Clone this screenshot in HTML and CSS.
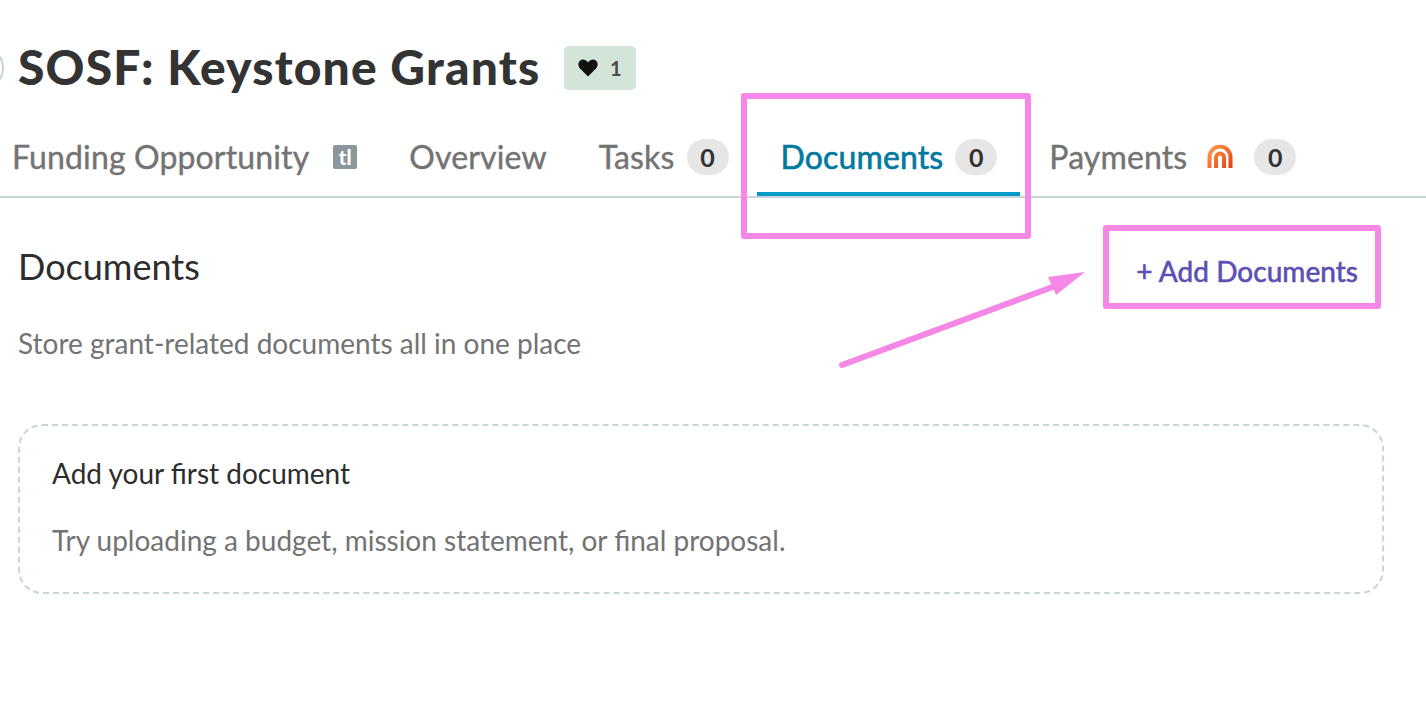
FILE: index.html
```html
<!DOCTYPE html>
<html lang="en">
<head>
<meta charset="utf-8">
<title>SOSF: Keystone Grants</title>
<link rel="stylesheet" href="styles.css">
</head>
<body>
<div class="page">
  <header class="title-row">
    <span class="avatar"></span>
    <h1 class="title">SOSF: Keystone Grants</h1>
    <span class="likes">
      <svg class="heart" viewBox="0 0 20 18" width="20" height="18"><path d="M10 17.500 2 9.400C-.2 7.100-.1 3.700 1.900 1.800 4-.1 7.200.1 10 3.200 12.800.1 16-.1 18.100 1.800c2 1.900 2.100 5.300-.1 7.600z" fill="#111"/></svg>
      <span class="likes-count">1</span>
    </span>
  </header>
  <nav class="tabs">
    <a class="tab tab-funding">Funding Opportunity <span class="tl">tl</span></a>
    <a class="tab tab-overview">Overview</a>
    <a class="tab tab-tasks">Tasks <span class="count">0</span></a>
    <a class="tab tab-docs active">Documents <span class="count">0</span></a>
    <a class="tab tab-pay">Payments
      <svg class="arch" viewBox="0 0 28 24" width="28" height="24">
        <defs><linearGradient id="archg" x1="0" y1="0" x2="1" y2="1"><stop offset="0" stop-color="#ff9a4d"/><stop offset="1" stop-color="#e8400f"/></linearGradient></defs>
        <path d="M3.500 23V12a10.500 10.500 0 0 1 21 0v11M10 23V12.500a4 4 0 0 1 8 0V23" fill="none" stroke="url(#archg)" stroke-width="4"/>
      </svg>
      <span class="count">0</span></a>
  </nav>
  <main class="content">
    <div class="section-head">
      <h2 class="section-title">Documents</h2>
      <a class="add-link">+ Add Documents</a>
    </div>
    <p class="section-desc">Store grant-related documents all in one place</p>
    <div class="empty">
      <h3 class="empty-title">Add your first document</h3>
      <p class="empty-text">Try uploading a budget, mission statement, or final proposal.</p>
    </div>
  </main>
</div>
<div class="mark mark-tab"></div>
<div class="mark mark-add"></div>
<svg class="arrow" viewBox="0 0 260 110" width="260" height="110">
  <path d="M6 100 L222 20" stroke="#f587e6" stroke-width="6" stroke-linecap="round" fill="none"/>
  <path d="M249 7 L212 12 L220 30 Z" fill="#f587e6"/>
</svg>
</body>
</html>
```
FILE: styles.css
```css
* { box-sizing: border-box; }
html, body { margin: 0; padding: 0; background: #fff; }
body { width: 1426px; height: 724px; overflow: hidden; position: relative; font-family: "Lato", "Liberation Sans", sans-serif; color: #2d2d2d; }
.page { display: flex; flex-direction: column; padding-top: 46px; }
.title-row { display: flex; align-items: center; height: 44px; padding-left: 18px; position: relative; }
.avatar { position: absolute; left: -40px; top: 0; width: 44px; height: 44px; border-radius: 50%; border: 2px solid #c7d5dc; background: #fff; }
.title { margin: 0 0 2px; font-size: 48px; font-weight: 900; line-height: 44px; color: #333; letter-spacing: 1.15px; }
.likes { margin-left: 24px; width: 72px; height: 44px; padding-right: 1px; background: #d3e5d8; border-radius: 5px; display: flex; align-items: center; justify-content: center; gap: 12px; }
.heart { display: block; }
.likes-count { font-size: 20px; font-weight: 700; color: #4a4a4a; }
.tabs { display: flex; align-items: flex-start; height: 72px; margin-top: 36px; border-bottom: 2px solid #c8d5d9; padding-left: 12px; }
.tab { display: flex; align-items: center; height: 70px; padding-bottom: 10px; font-size: 32px; color: #737373; white-space: nowrap; letter-spacing: 0.14px; -webkit-text-stroke: 0.4px currentColor; }
.tab-overview { margin-left: 52px; }
.tab-tasks { margin-left: 52px; gap: 12px; }
.tab-funding { gap: 24px; }
.tab-docs { margin-left: 28px; padding: 0 23px 6px 24px; gap: 12px; color: #00799f; border-bottom: 4px solid #009bc9; -webkit-text-stroke: 0.6px currentColor; }
.tab-pay { margin-left: 29px; }
.tl { display: inline-flex; align-items: center; justify-content: center; width: 24px; height: 24px; margin-top: 2px; border-radius: 2px; background: #8a9699; color: #fff; font-size: 20px; font-weight: 900; line-height: 1; -webkit-text-stroke: 0; }
.count { display: inline-flex; align-items: center; justify-content: center; width: 42px; height: 36px; margin-top: 2px; border-radius: 18px; background: #e6e6e6; color: #333; font-size: 25px; font-weight: 700; -webkit-text-stroke: 0; letter-spacing: 0; }
.arch { margin: 2px 20px 0 19px; display: block; }
.content { padding: 0 42px 0 18px; }
.section-head { display: flex; justify-content: space-between; align-items: center; margin-top: 44px; height: 56px; }
.section-title { margin: 0 0 8px; font-size: 36px; font-weight: 400; color: #2d2d2d; }
.add-link { margin-top: 2px; font-size: 28px; letter-spacing: 0.05px; color: #5a50b5; padding-right: 26px; -webkit-text-stroke: 0.6px currentColor; }
.section-desc { margin: 28px 0 0; font-size: 28px; line-height: 34px; color: #737373; }
.empty { margin-top: 64px; height: 170px; border: 2px dashed #c8d5d9; border-radius: 24px; padding: 30px 32px; }
.empty-title { margin: 0; font-size: 28px; line-height: 34px; font-weight: 400; color: #2d2d2d; }
.empty-text { margin: 33px 0 0; font-size: 28px; line-height: 34px; color: #737373; }
.mark { position: absolute; border: 6px solid #f587e6; border-radius: 3px; }
.mark-tab { left: 741px; top: 93px; width: 290px; height: 146px; }
.mark-add { left: 1103px; top: 225px; width: 278px; height: 84px; }
.arrow { position: absolute; left: 836px; top: 265px; }
```
